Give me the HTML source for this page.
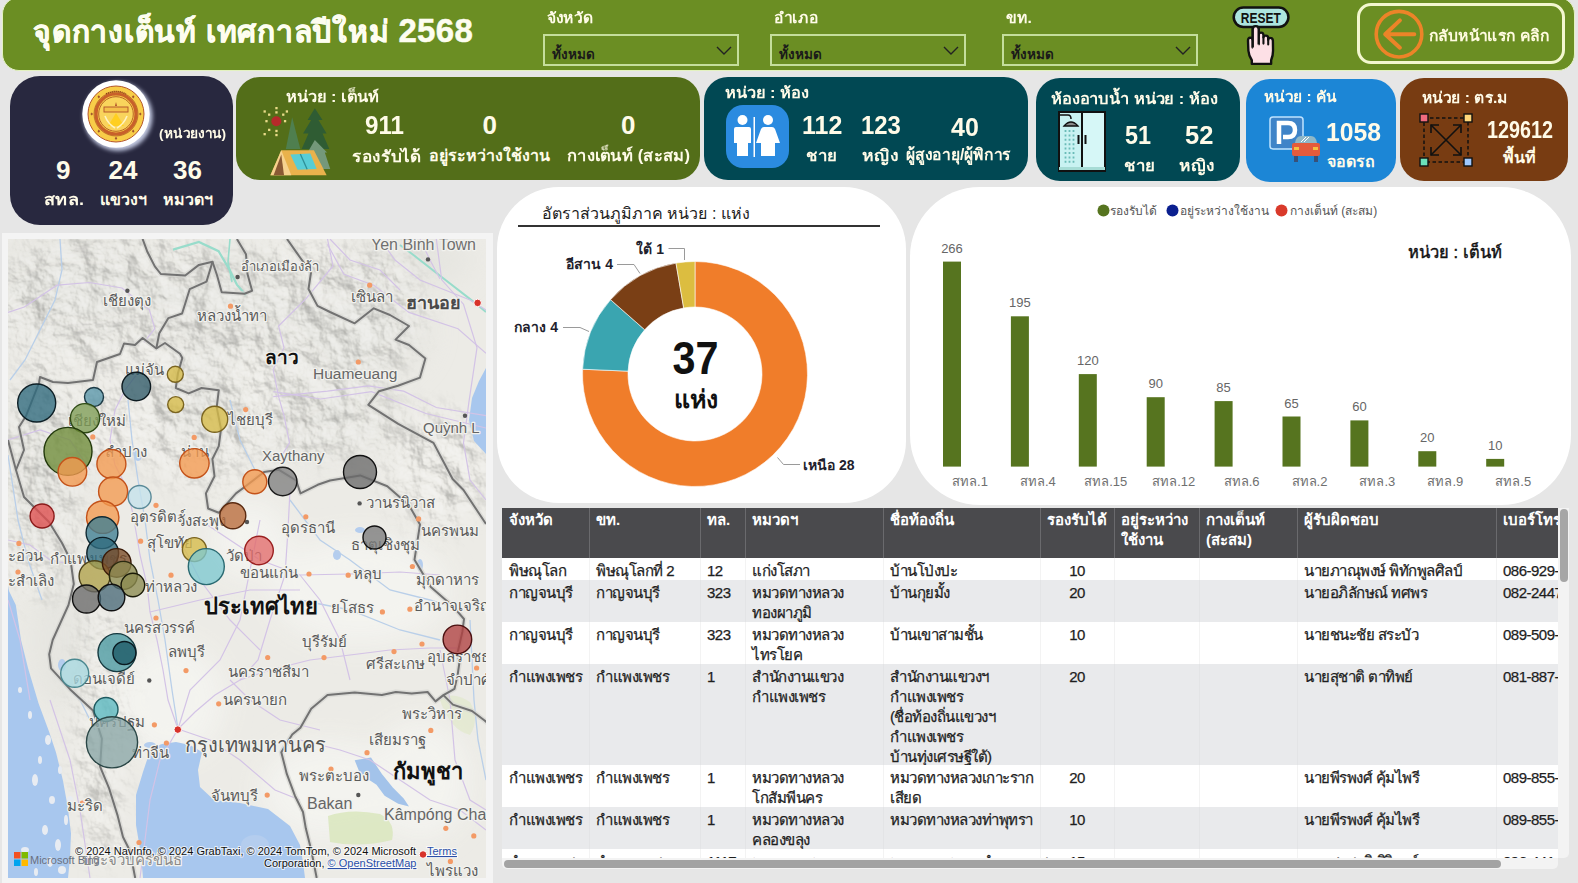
<!DOCTYPE html>
<html><head><meta charset="utf-8">
<style>
*{box-sizing:border-box;margin:0;padding:0}
html,body{width:1578px;height:883px;overflow:hidden;background:#e6e6e6;font-family:"Liberation Sans",sans-serif}
.a{position:absolute}
.c{position:absolute;white-space:nowrap}
.hdr{left:2px;top:-3px;width:1573px;height:74px;background:#6b8e23;border-radius:17px;border:1px solid #e3f2c0}
.ttl{left:33px;top:7.5px;font-size:30px;font-weight:bold;color:#fdfdf0;-webkit-text-stroke:0.5px #fdfdf0;letter-spacing:0.75px}
.flab{font-size:14.5px;font-weight:bold;color:#fffbe8;top:6px;transform-origin:0 0;transform:scaleX(1.08)}
.dd{top:34px;height:32px;border:2px solid #c5de9c;width:196px}
.dd span{position:absolute;left:7px;top:7px;font-size:13.5px;font-weight:bold;color:#1a1a1a}
.dd svg{position:absolute;right:5px;top:10px}
.card{border-radius:24px}
.kpi{color:#fffbe8;font-weight:bold}
.num{font-size:26px;font-weight:bold;color:#fffbe8;transform-origin:0 0}
.lab{font-size:16px;font-weight:bold;color:#fffbe8;transform-origin:0 0}
.unit{font-size:15px;font-weight:bold;color:#fffbe8;transform-origin:0 0}
.th{font-size:15px;font-weight:bold;color:#fff;line-height:20px;white-space:nowrap}
.td{font-size:15px;color:#1e1e1e;line-height:20px;white-space:nowrap;margin-top:1.5px;letter-spacing:-0.5px;-webkit-text-stroke:0.25px #1e1e1e}
</style></head><body>

<!-- HEADER -->
<div class="a hdr"></div>
<div class="c ttl">จุดกางเต็นท์ เทศกาลปีใหม่ <span style="font-size:33px;letter-spacing:0.3px">2568</span></div>

<div class="c flab" style="left:547px">จังหวัด</div>
<div class="a dd" style="left:543px"><span>ทั้งหมด</span><svg width="16" height="10" viewBox="0 0 16 10"><path d="M1 1 L8 8 L15 1" fill="none" stroke="#222" stroke-width="1.4"/></svg></div>
<div class="c flab" style="left:774px">อำเภอ</div>
<div class="a dd" style="left:770px"><span>ทั้งหมด</span><svg width="16" height="10" viewBox="0 0 16 10"><path d="M1 1 L8 8 L15 1" fill="none" stroke="#222" stroke-width="1.4"/></svg></div>
<div class="c flab" style="left:1006px">ขท.</div>
<div class="a dd" style="left:1002px"><span>ทั้งหมด</span><svg width="16" height="10" viewBox="0 0 16 10"><path d="M1 1 L8 8 L15 1" fill="none" stroke="#222" stroke-width="1.4"/></svg></div>

<!-- RESET -->
<svg class="a" style="left:1225px;top:0px" width="75" height="70" viewBox="0 0 946 883">
  <path d="M350 600 L350 370 Q350 330 387 330 Q425 330 425 370 L425 440 Q425 412 455 412 Q485 412 485 445 L485 470 Q490 448 515 450 Q545 452 545 480 L545 500 Q550 476 572 478 Q602 480 604 512 L606 640 Q606 700 582 760 L582 805 L338 805 L338 760 Q300 700 295 640 L290 512 Q290 476 318 474 Q348 474 350 512 Z" fill="#fde0e6" stroke="#111" stroke-width="30" stroke-linejoin="round"/>
  <path d="M425 440 L425 560 M485 470 L485 550 M545 500 L545 560" stroke="#111" stroke-width="26" stroke-linecap="round"/>
  <rect x="110" y="95" width="690" height="245" rx="122" fill="#ade5df" stroke="#111" stroke-width="32"/>
  <path d="M350 620 L350 370 Q350 330 387 330 Q425 330 425 370 L425 620 Z" fill="#fde0e6"/><path d="M350 600 L350 370 Q350 330 387 330 Q425 330 425 370 L425 560" fill="none" stroke="#111" stroke-width="30" stroke-linejoin="round"/>
  <text x="452" y="286" text-anchor="middle" font-family="Liberation Sans" font-weight="bold" font-size="185" fill="#111" transform="translate(452 0) scale(0.82 1) translate(-452 0)">RESET</text>
</svg>
<!-- BACK BUTTON -->
<div class="a" style="left:1357px;top:3px;width:208px;height:61px;border:3px solid #f3f7cf;border-radius:14px"></div>
<svg class="a" style="left:1373px;top:8px" width="52" height="52" viewBox="0 0 52 52">
  <circle cx="26" cy="26.2" r="22.8" fill="none" stroke="#ec8428" stroke-width="3.6"/>
  <path d="M41.3 26.2 H12.2 M26.9 12.4 L12.2 26.2 L26.9 39.7" fill="none" stroke="#ec8428" stroke-width="4" stroke-linecap="round" stroke-linejoin="round"/>
</svg>
<div class="c" style="left:1429px;top:24px;font-size:15px;font-weight:bold;color:#fffbe0;transform-origin:0 0;transform:scaleX(1.044)">กลับหน้าแรก คลิก</div>

<!-- KPI CARDS -->
<div class="a card" style="left:10px;top:76px;width:223px;height:149px;background:#28283f;border-radius:30px"></div>
<div class="a card" style="left:236px;top:77px;width:464px;height:103px;background:#536e19"></div>
<div class="a card" style="left:704px;top:77px;width:324px;height:103px;background:#014853"></div>
<div class="a card" style="left:1036px;top:78px;width:204px;height:103px;background:#014853"></div>
<div class="a card" style="left:1246px;top:79px;width:150px;height:103px;background:#1c86d6"></div>
<div class="a card" style="left:1400px;top:78px;width:168px;height:103px;background:#783c12"></div>


<!-- NAVY CARD CONTENT -->
<svg class="a" style="left:77px;top:75px" width="80" height="80" viewBox="-3 -3 80 80">
  <defs><filter id="glw" x="-30%" y="-30%" width="160%" height="160%"><feGaussianBlur stdDeviation="2.2"/></filter></defs>
  <circle cx="38" cy="38.5" r="34.5" fill="#dfe6ff" opacity="0.85" filter="url(#glw)"/>
  <circle cx="36" cy="36" r="33.7" fill="#ffffff"/>
  <circle cx="36" cy="36" r="28" fill="#f8cd48" stroke="#b5562a" stroke-width="1"/>
  <path d="M53.2 17.2 L54.5 18.8 L53.2 20.4 L51.9 18.8 Z" fill="#a0522d"/><path d="M60.3 34.4 L61.6 36.0 L60.3 37.6 L59.0 36.0 Z" fill="#a0522d"/><path d="M53.2 51.6 L54.5 53.2 L53.2 54.8 L51.9 53.2 Z" fill="#a0522d"/><path d="M36.0 58.7 L37.3 60.3 L36.0 61.9 L34.7 60.3 Z" fill="#a0522d"/><path d="M18.8 51.6 L20.1 53.2 L18.8 54.8 L17.5 53.2 Z" fill="#a0522d"/><path d="M11.7 34.4 L13.0 36.0 L11.7 37.6 L10.4 36.0 Z" fill="#a0522d"/><path d="M18.8 17.2 L20.1 18.8 L18.8 20.4 L17.5 18.8 Z" fill="#a0522d"/>
  <path d="M26 16 Q36 11 46 16" fill="none" stroke="#8a3a1a" stroke-width="1.6" stroke-dasharray="1.2 0.8"/>
  <circle cx="36" cy="36" r="20" fill="none" stroke="#c8602a" stroke-width="3.2"/>
  <circle cx="36" cy="36" r="17.3" fill="#f9d45c" stroke="#a84a1e" stroke-width="0.8"/>
  <circle cx="36" cy="36" r="22" fill="none" stroke="#a84a1e" stroke-width="0.7"/>
  <rect x="24" y="29" width="24" height="5" fill="#f4c04a" stroke="#b0502a" stroke-width="0.9"/>
  <path d="M35 28 L36 24 L37 28 Z" fill="#b0502a"/>
  <path d="M28 48 L36 35 L44 48 Z" fill="#ffcf20"/>
  <path d="M25 38 Q28 46 35 50 M47 38 Q44 46 37 50" fill="none" stroke="#fff3c0" stroke-width="1.6"/>
</svg>
<div class="c" style="left:159px;top:123px;font-size:13px;font-weight:bold;color:#fffbe8;transform-origin:0 0;transform:scaleX(1.053)">(หน่วยงาน)</div>
<div class="c num" style="left:56px;top:155px">9</div>
<div class="c num" style="left:108.5px;top:155px">24</div>
<div class="c num" style="left:173px;top:155px">36</div>
<div class="c lab" style="left:44px;top:187px;transform:scaleX(1.13)">สทล.</div>
<div class="c lab" style="left:100px;top:187px">แขวงฯ</div>
<div class="c lab" style="left:163px;top:187px">หมวดฯ</div>

<!-- GREEN CARD CONTENT -->
<div class="c unit" style="left:286px;top:85px;transform:scaleX(1.094)">หน่วย : เต็นท์</div>
<svg class="a" style="left:255px;top:100px" width="90" height="80" viewBox="0 0 90 80">
<rect x="20.31" y="6.98" width="2.3" height="2.3" fill="#eadc8a"/><rect x="20.31" y="11.24" width="2.3" height="2.3" fill="#eadc8a"/><rect x="8.52" y="10.33" width="2.3" height="2.3" fill="#eadc8a"/><rect x="13.05" y="13.51" width="2.3" height="2.3" fill="#eadc8a"/><rect x="30.73" y="10.33" width="2.3" height="2.3" fill="#eadc8a"/><rect x="27.11" y="13.51" width="2.3" height="2.3" fill="#eadc8a"/><rect x="10.33" y="20.03" width="2.3" height="2.3" fill="#eadc8a"/><rect x="28.92" y="20.03" width="2.3" height="2.3" fill="#eadc8a"/><rect x="13.05" y="28.74" width="2.3" height="2.3" fill="#eadc8a"/><rect x="8.52" y="33.00" width="2.3" height="2.3" fill="#eadc8a"/><rect x="20.31" y="29.83" width="2.3" height="2.3" fill="#eadc8a"/><rect x="20.31" y="33.90" width="2.3" height="2.3" fill="#eadc8a"/>
<circle cx="21.31" cy="21.31" r="5" fill="#b52a2a"/>
<polygon points="37.17,17.23 30.83,48.96 45.33,48.96" fill="#4f7f4f"/>
<polygon points="59.84,8.16 52.58,19.95 56.21,19.95 48.05,33.54 53.49,33.54 46.69,48.96 74.34,48.96 67.54,33.54 71.62,33.54 63.46,19.95 67.54,19.95" fill="#2f5c33"/>
<polygon points="59.84,39.89 52.58,52.58 55.30,52.58 50.77,68.90 75.25,68.90 69.81,52.58 72.08,52.58" fill="#74987a"/>
<polygon points="15.41,75.25 26.29,50.32 58.93,50.32 71.62,75.25" fill="#e9b24c"/>
<polygon points="15.41,75.25 26.29,50.32 36.26,75.25" fill="#f6d28e"/>
<polygon points="18.59,75.25 26.29,54.40 29.01,75.25" fill="#8a5a34"/>
<polygon points="35.36,54.40 55.30,53.49 61.65,68.90 42.61,69.81" fill="#58cdd6"/>
<path d="M45.33 53.94 L52.13 69.36" stroke="#2f8f98" stroke-width="1.3"/>
</svg>
<div class="c num" style="left:365px;top:110px;transform:scaleX(0.93)">911</div>
<div class="c num" style="left:482.5px;top:110px">0</div>
<div class="c num" style="left:621px;top:110px">0</div>
<div class="c lab" style="left:352px;top:144px;transform:scaleX(1.07)">รองรับได้</div>
<div class="c lab" style="left:429px;top:143px">อยู่ระหว่างใช้งาน</div>
<div class="c lab" style="left:567px;top:143px;transform:scaleX(1.033)">กางเต็นท์ (สะสม)</div>

<!-- TEAL CARD CONTENT -->
<div class="c unit" style="left:725px;top:81px;transform:scaleX(1.095)">หน่วย : ห้อง</div>
<svg class="a" style="left:726px;top:105px" width="63" height="63" viewBox="0 0 63 63">
  <rect x="0" y="0" width="63" height="63" rx="17" fill="#2b8be0"/>
  <circle cx="16.5" cy="15" r="5" fill="#fff"/>
  <path d="M10 22 H23 Q25 22 25 24 V38 H22 V51 H11 V38 H8 V24 Q8 22 10 22 Z" fill="#fff"/>
  <rect x="27.5" y="12" width="1.5" height="40" fill="#fff"/>
  <circle cx="42" cy="15" r="5" fill="#fff"/>
  <path d="M38 22 H46 Q48 22 49 24 L54 38 H49 V51 H35 V38 H30 L35 24 Q36 22 38 22 Z" fill="#fff"/>
</svg>
<div class="c num" style="left:802px;top:110px;transform:scaleX(0.96)">112</div>
<div class="c num" style="left:861px;top:110px;transform:scaleX(0.92)">123</div>
<div class="c num" style="left:951px;top:112px;transform:scaleX(0.96)">40</div>
<div class="c lab" style="left:806px;top:143px;transform:scaleX(1.05)">ชาย</div>
<div class="c lab" style="left:862px;top:143px;transform:scaleX(1.1)">หญิง</div>
<div class="c lab" style="left:906px;top:142px;transform:scaleX(0.98)">ผู้สูงอายุ/ผู้พิการ</div>

<!-- TEAL2 CARD -->
<div class="c unit" style="left:1051px;top:87px;transform:scaleX(1.099)">ห้องอาบน้ำ หน่วย : ห้อง</div>
<svg class="a" style="left:1056px;top:110px" width="52" height="64" viewBox="0 0 52 64">
  <rect x="2" y="1" width="48" height="61" fill="#111"/>
  <rect x="4" y="3" width="21" height="54" fill="#c9f2f2"/>
  <rect x="27" y="3" width="21" height="54" fill="#d6f7f7"/>
  <rect x="3" y="57" width="46" height="3" fill="#a7dcd6"/>
  <path d="M4 5 H12 Q15 5 15 9" fill="none" stroke="#111" stroke-width="1.5"/>
  <path d="M8 16 Q15 8 22 16 Z" fill="#8a8a8a" stroke="#111" stroke-width="1.3"/>
  <g stroke="#6bbcb8" stroke-width="1.8" stroke-dasharray="2 2.4"><path d="M9.5 20 V54 M13.5 20 V54 M17.5 20 V54"/></g>
  <rect x="21.5" y="25" width="2" height="9" fill="#111"/><rect x="28.5" y="25" width="2" height="9" fill="#111"/>
</svg>
<div class="c num" style="left:1125px;top:120px;transform:scaleX(0.9)">51</div>
<div class="c num" style="left:1185px;top:120px;transform:scaleX(0.98)">52</div>
<div class="c lab" style="left:1123.5px;top:153px;transform:scaleX(1.05)">ชาย</div>
<div class="c lab" style="left:1178.5px;top:153px;transform:scaleX(1.08)">หญิง</div>

<!-- BLUE CARD -->
<div class="c unit" style="left:1264px;top:85px;transform:scaleX(1.03)">หน่วย : คัน</div>
<svg class="a" style="left:1268px;top:115px" width="62" height="52" viewBox="0 0 62 52">
  <rect x="2" y="2" width="33" height="32" rx="3" fill="#3f84c8" stroke="#bfe3ff" stroke-width="1.5"/>
  <path d="M11 29 V8 H20 Q27 8 27 15 Q27 22 20 22 H15" fill="none" stroke="#fff" stroke-width="4.5"/>
  <path d="M27 28 Q28 21 33 21 H43 Q48 21 49 28 Z" fill="#8fb8c8"/>
  <path d="M33 27 L38 22 M36 27 L41 22" stroke="#fff" stroke-width="1"/>
  <rect x="24" y="28" width="28" height="13" rx="2" fill="#e55b3c"/>
  <rect x="26" y="32" width="5" height="3" fill="#f6c041"/><rect x="45" y="32" width="5" height="3" fill="#f6c041"/>
  <rect x="26" y="41" width="4" height="6" fill="#37517a"/><rect x="46" y="41" width="4" height="6" fill="#37517a"/>
</svg>
<div class="c num" style="left:1326px;top:117px;transform:scaleX(0.95)">1058</div>
<div class="c lab" style="left:1327px;top:149px">จอดรถ</div>

<!-- BROWN CARD -->
<div class="c unit" style="left:1422px;top:86px;transform:scaleX(1.04)">หน่วย : ตร.ม</div>
<svg class="a" style="left:1418px;top:112px" width="56" height="56" viewBox="0 0 56 56">
  <rect x="6" y="6" width="44" height="44" fill="none" stroke="#111" stroke-width="1.5" stroke-dasharray="3.5 2.5"/>
  <path d="M13 13 L43 43 M43 13 L13 43" stroke="#111" stroke-width="1.6"/>
  <path d="M13 21 V13 H21 M35 13 H43 V21 M43 35 V43 H35 M21 43 H13 V35" fill="none" stroke="#111" stroke-width="1.6"/>
  <rect x="2" y="2" width="8" height="8" fill="#f06b7e" stroke="#111" stroke-width="1.4"/>
  <rect x="46" y="2" width="8" height="8" fill="#ffd77a" stroke="#111" stroke-width="1.4"/>
  <rect x="2" y="46" width="8" height="8" fill="#6be0b8" stroke="#111" stroke-width="1.4"/>
  <rect x="46" y="46" width="8" height="8" fill="#9ec8ff" stroke="#111" stroke-width="1.4"/>
</svg>
<div class="c num" style="left:1487px;top:116.5px;font-size:23px;transform:scaleX(0.86)">129612</div>
<div class="c lab" style="left:1503px;top:145px">พื้นที่</div>

<!-- WHITE CHART CARDS -->
<div class="a" style="left:497px;top:187px;width:409px;height:316px;background:#fff;border-radius:62px"></div>
<div class="a" style="left:910px;top:187px;width:661px;height:318px;background:#fff;border-radius:70px"></div>


<!-- DONUT -->
<div class="c" style="left:542px;top:201px;font-size:16px;color:#1d1d1d">อัตราส่วนภูมิภาค หน่วย : แห่ง</div>
<div class="a" style="left:518px;top:224.5px;width:362px;height:2.5px;background:#333"></div>
<svg class="a" style="left:0;top:0" width="910" height="505" viewBox="0 0 910 505">
<path d="M695.00 261.50 A112.5 112.5 0 1 1 582.60 369.23 L628.06 371.16 A67 67 0 1 0 695.00 307.00 Z" fill="#f07d2a" stroke="#fff" stroke-width="0.6"/>
<path d="M582.60 369.23 A112.5 112.5 0 0 1 610.55 299.67 L644.70 329.73 A67 67 0 0 0 628.06 371.16 Z" fill="#3aa5b0" stroke="#fff" stroke-width="0.6"/>
<path d="M610.55 299.67 A112.5 112.5 0 0 1 675.99 263.12 L683.68 307.96 A67 67 0 0 0 644.70 329.73 Z" fill="#7a3f15" stroke="#fff" stroke-width="0.6"/>
<path d="M675.99 263.12 A112.5 112.5 0 0 1 695.00 261.50 L695.00 307.00 A67 67 0 0 0 683.68 307.96 Z" fill="#dcbd40" stroke="#fff" stroke-width="0.6"/>
<g fill="none" stroke="#9a9a9a" stroke-width="1">
<path d="M668.5 248.5 H684.5 V260"/>
<path d="M617 264.5 H634 L640 273.5"/>
<path d="M563 327.5 H580 L589 331.5"/>
<path d="M777.5 457.5 L783.5 464.5 H800"/>
</g>
<g font-family="Liberation Sans" font-weight="bold" font-size="14" fill="#1f1f2e">
<text x="664" y="253.5" text-anchor="end">ใต้ 1</text>
<text x="613" y="269" text-anchor="end">อีสาน 4</text>
<text x="558" y="332" text-anchor="end">กลาง 4</text>
<text x="803" y="469.5">เหนือ 28</text>
</g>
<text x="695.5" y="374.5" text-anchor="middle" font-family="Liberation Sans" font-weight="bold" font-size="47" fill="#111" transform="translate(695.5 0) scale(0.88 1) translate(-695.5 0)">37</text>
<text x="696" y="407.5" text-anchor="middle" font-family="Liberation Sans" font-weight="bold" font-size="25" fill="#111">แห่ง</text>
</svg>

<!-- BAR CHART -->
<svg class="a" style="left:0;top:0" width="1578" height="505" viewBox="0 0 1578 505">
<style>.bv{font-family:"Liberation Sans";font-size:13px;fill:#666} .bc{font-family:"Liberation Sans";font-size:13px;fill:#707070}</style>
<rect x="943.0" y="261.6" width="18" height="205.0" fill="#56741f"/><text x="952.0" y="252.6" text-anchor="middle" class="bv">266</text><text x="970.0" y="486.0" text-anchor="middle" class="bc">สทล.1</text><rect x="1010.9" y="316.3" width="18" height="150.3" fill="#56741f"/><text x="1019.9" y="307.3" text-anchor="middle" class="bv">195</text><text x="1037.9" y="486.0" text-anchor="middle" class="bc">สทล.4</text><rect x="1078.8" y="374.1" width="18" height="92.5" fill="#56741f"/><text x="1087.8" y="365.1" text-anchor="middle" class="bv">120</text><text x="1105.8" y="486.0" text-anchor="middle" class="bc">สทล.15</text><rect x="1146.7" y="397.2" width="18" height="69.4" fill="#56741f"/><text x="1155.7" y="388.2" text-anchor="middle" class="bv">90</text><text x="1173.7" y="486.0" text-anchor="middle" class="bc">สทล.12</text><rect x="1214.6" y="401.1" width="18" height="65.5" fill="#56741f"/><text x="1223.6" y="392.1" text-anchor="middle" class="bv">85</text><text x="1241.6" y="486.0" text-anchor="middle" class="bc">สทล.6</text><rect x="1282.5" y="416.5" width="18" height="50.1" fill="#56741f"/><text x="1291.5" y="407.5" text-anchor="middle" class="bv">65</text><text x="1309.5" y="486.0" text-anchor="middle" class="bc">สทล.2</text><rect x="1350.4" y="420.4" width="18" height="46.2" fill="#56741f"/><text x="1359.4" y="411.4" text-anchor="middle" class="bv">60</text><text x="1377.4" y="486.0" text-anchor="middle" class="bc">สทล.3</text><rect x="1418.3" y="451.2" width="18" height="15.4" fill="#56741f"/><text x="1427.3" y="442.2" text-anchor="middle" class="bv">20</text><text x="1445.3" y="486.0" text-anchor="middle" class="bc">สทล.9</text><rect x="1486.2" y="458.9" width="18" height="7.7" fill="#56741f"/><text x="1495.2" y="449.9" text-anchor="middle" class="bv">10</text><text x="1513.2" y="486.0" text-anchor="middle" class="bc">สทล.5</text>
<circle cx="1103.5" cy="210.5" r="6" fill="#56741f"/>
<circle cx="1172.5" cy="210.5" r="6" fill="#0a1f8f"/>
<circle cx="1281.5" cy="210.5" r="6" fill="#d93a2b"/>
<g font-family="Liberation Sans" font-size="12" fill="#555">
<text x="1110" y="215">รองรับได้</text>
<text x="1180" y="215">อยู่ระหว่างใช้งาน</text>
<text x="1290" y="215">กางเต็นท์ (สะสม)</text>
</g>
<text x="1408" y="258" font-family="Liberation Sans" font-size="16.5" fill="#111" stroke="#111" stroke-width="0.45">หน่วย : เต็นท์</text>
</svg>

<!-- MAP FRAME -->
<div class="a" style="left:2px;top:233px;width:491px;height:650px;background:#f4f4f4"></div>
<!--MAPSTART-->
<svg class="a" style="left:8px;top:239px" width="478" height="639" viewBox="8 239 478 639">
<defs><clipPath id="mc"><rect x="8" y="239" width="478" height="639"/></clipPath><filter id="tex" x="0" y="0" width="100%" height="100%" color-interpolation-filters="sRGB"><feTurbulence type="fractalNoise" baseFrequency="0.03" numOctaves="5" seed="7" result="n"/><feDiffuseLighting in="n" surfaceScale="7" diffuseConstant="1.0" lighting-color="#ffffff" result="l"><feDistantLight azimuth="315" elevation="55"/></feDiffuseLighting><feColorMatrix in="l" type="matrix" values="0 0 0 0 0.3  0 0 0 0 0.3  0 0 0 0 0.29  -2.2 0 0 0 1.8"/></filter><filter id="tex2" x="0" y="0" width="100%" height="100%" color-interpolation-filters="sRGB"><feTurbulence type="fractalNoise" baseFrequency="0.03" numOctaves="5" seed="7" result="n"/><feDiffuseLighting in="n" surfaceScale="7" diffuseConstant="1.0" lighting-color="#ffffff" result="l"><feDistantLight azimuth="315" elevation="55"/></feDiffuseLighting><feColorMatrix in="l" type="matrix" values="0 0 0 0 1  0 0 0 0 1  0 0 0 0 1  2.5 0 0 0 -2.05"/></filter><mask id="mtn"><rect x="8" y="239" width="478" height="639" fill="#000"/><g filter="url(#bl8)" fill="#fff"><ellipse cx="120" cy="300" rx="140" ry="70"/><ellipse cx="300" cy="320" rx="120" ry="80"/><ellipse cx="375" cy="285" rx="45" ry="40"/><ellipse cx="200" cy="420" rx="60" ry="70"/><ellipse cx="320" cy="420" rx="80" ry="40"/><ellipse cx="40" cy="480" rx="40" ry="120"/><ellipse cx="100" cy="730" rx="22" ry="140"/><ellipse cx="440" cy="470" rx="50" ry="60"/><ellipse cx="110" cy="420" rx="50" ry="40"/></g></mask><filter id="bl8"><feGaussianBlur stdDeviation="14"/></filter><filter id="halo"><feMorphology operator="dilate" radius="1.2"/></filter></defs>
<g clip-path="url(#mc)">
<rect x="8" y="239" width="478" height="639" fill="#ecebe6"/>
<g filter="url(#bl8)" fill="#e2e2dd" opacity="0.6">
<ellipse cx="80" cy="290" rx="110" ry="60"/>
<ellipse cx="230" cy="300" rx="90" ry="55"/>
<ellipse cx="350" cy="330" rx="80" ry="60"/>
<ellipse cx="40" cy="470" rx="40" ry="90"/>
<ellipse cx="60" cy="640" rx="30" ry="70"/>
<ellipse cx="330" cy="420" rx="70" ry="40"/>
<ellipse cx="200" cy="400" rx="40" ry="50"/>
<ellipse cx="410" cy="260" rx="60" ry="30"/>
</g>
<g filter="url(#bl8)" fill="#f4f4f1" opacity="0.9">
<ellipse cx="170" cy="700" rx="55" ry="60"/>
<ellipse cx="360" cy="590" rx="90" ry="55"/>
<ellipse cx="330" cy="790" rx="70" ry="50"/>
<ellipse cx="250" cy="540" rx="40" ry="40"/>
<ellipse cx="420" cy="780" rx="50" ry="60"/>
</g>
<g mask="url(#mtn)"><rect x="8" y="239" width="478" height="639" filter="url(#tex)" opacity="0.3"/><rect x="8" y="239" width="478" height="639" filter="url(#tex2)" opacity="0.8"/></g>
<ellipse cx="360" cy="830" rx="34" ry="14" fill="#d5e3b5" filter="url(#bl8)" opacity="0.0"/>
<path d="M328 816 Q350 808 380 814 Q396 822 392 840 Q360 848 330 842 Z" fill="#d9e6bd" opacity="0.85"/>
<path d="M440 700 Q452 690 470 702 Q480 720 470 735 Q450 730 440 700 Z" fill="#dfe8c6" opacity="0.6"/>
<polygon points="8.0,586.0 9.0,591.0 15.8,605.0 21.0,640.0 28.0,668.0 38.6,703.5 49.0,731.6 56.0,752.6 63.0,780.7 68.0,808.8 71.0,833.4 70.0,858.0 68.0,878.0 8.0,878.0" fill="#a8c7ee"/>
<polygon points="151.0,748.0 162.0,744.0 176.0,742.0 190.0,745.0 202.0,752.0 198.0,770.0 200.0,787.0 214.0,800.0 240.0,803.0 268.0,809.0 290.0,826.0 300.0,845.0 303.0,862.0 305.0,878.0 143.0,878.0 141.0,855.0 136.0,825.0 136.0,795.0 143.0,772.0" fill="#a8c7ee"/>
<polygon points="486.0,368.0 479.0,381.0 472.0,398.0 469.0,420.0 474.0,441.0 486.0,454.0" fill="#a8c7ee"/>
<polygon points="354.7,760.3 371.0,757.6 381.9,773.9 392.8,787.5 403.7,798.4 409.0,806.5 398.2,803.8 384.6,795.7 376.5,784.8 360.2,773.9" fill="#a3c3ea"/>
<ellipse cx="138" cy="455" rx="4" ry="6" fill="#b4cdee"/>
<ellipse cx="360" cy="530" rx="5" ry="3" fill="#b4cdee"/>
<ellipse cx="337" cy="555" rx="4" ry="5" fill="#b4cdee"/>
<ellipse cx="62" cy="665" rx="4" ry="6" fill="#b4cdee"/>
<ellipse cx="420" cy="565" rx="3" ry="6" fill="#b4cdee"/>
<ellipse cx="150" cy="745" rx="6" ry="3" fill="#b4cdee"/>
<ellipse cx="255" cy="845" rx="14" ry="10" fill="#b4cdee"/>
<ellipse cx="35" cy="780" rx="3" ry="6" fill="#e8ecf2"/>
<ellipse cx="45" cy="830" rx="3" ry="5" fill="#e8ecf2"/>
<ellipse cx="25" cy="850" rx="4" ry="3" fill="#e8ecf2"/>
<ellipse cx="52" cy="800" rx="3" ry="4" fill="#e8ecf2"/>
<ellipse cx="40" cy="760" rx="2" ry="4" fill="#e8ecf2"/>
<ellipse cx="48" cy="740" rx="3" ry="5" fill="#e8ecf2"/>
<ellipse cx="30" cy="715" rx="2" ry="4" fill="#e8ecf2"/>
<ellipse cx="58" cy="845" rx="3" ry="6" fill="#e8ecf2"/>
<ellipse cx="62" cy="870" rx="4" ry="4" fill="#e8ecf2"/>
<ellipse cx="20" cy="690" rx="2" ry="3" fill="#e8ecf2"/>
<ellipse cx="66" cy="820" rx="2" ry="5" fill="#e8ecf2"/>
<ellipse cx="50" cy="862" rx="3" ry="5" fill="#e8ecf2"/>
<ellipse cx="36" cy="872" rx="2" ry="4" fill="#e8ecf2"/>
<ellipse cx="70" cy="800" rx="3" ry="4" fill="#e8ecf2"/>
<ellipse cx="60" cy="770" rx="2" ry="4" fill="#e8ecf2"/>
<g fill="none" stroke="#b9cfe9" stroke-width="1.3">
<polyline points="60.0,239.0 62.0,270.0 55.0,300.0 40.0,330.0 25.0,360.0 10.0,380.0"/>
<polyline points="8.0,455.0 18.0,520.0 28.0,560.0 42.0,600.0"/>
<polyline points="128.0,400.0 132.0,440.0 138.0,480.0 145.0,520.0 150.0,560.0 158.0,600.0 165.0,640.0 172.0,690.0 178.0,729.0"/>
<polyline points="230.0,400.0 240.0,440.0 255.0,470.0"/>
<polyline points="290.0,500.0 320.0,540.0 350.0,560.0 390.0,590.0 430.0,600.0 463.0,610.0"/>
<polyline points="300.0,600.0 350.0,610.0 400.0,630.0 440.0,640.0"/>
<polyline points="470.0,620.0 472.0,660.0 474.0,700.0 478.0,740.0 486.0,780.0"/>
<polyline points="60.0,680.0 80.0,700.0 95.0,730.0"/>
</g>
<polyline points="173,249.6 198.9,242 218.6,251.2 229.3,269.4 236.9,284.6 246,295.3" fill="none" stroke="#98dccb" stroke-width="2.2"/>
<polyline points="230,239 228,262 232,282" fill="none" stroke="#98dccb" stroke-width="1.6"/>
<polyline points="400,245 411.5,253.5 444.2,279 476.9,304.4 486,312" fill="none" stroke="#98dccb" stroke-width="2"/>
<g fill="none" stroke="#d3c3e6" stroke-width="1.2">
<polyline points="8.0,312.4 24.3,307.0 57.0,285.2 89.5,282.5 122.0,288.0 149.3,309.7 154.8,328.7 143.9,342.3"/>
<polyline points="327.5,239.0 333.0,266.0 305.8,298.8 278.6,326.0 284.0,347.7 273.2,369.5 278.6,396.6 284.0,415.7 289.5,442.9 281.3,456.5"/>
<polyline points="273.2,396.6 327.5,391.2 368.3,385.8 403.7,391.2 436.3,407.5 486.0,415.7"/>
<polyline points="327.5,244.4 343.9,274.3 373.8,285.2 409.0,312.4 458.0,328.7 486.0,353.2"/>
<polyline points="436.3,239.0 441.7,279.8 463.5,304.2 477.0,347.7 468.9,402.1 463.5,442.9 470.0,480.0 486.0,500.0"/>
<polyline points="178.0,729.0 168.0,700.0 163.0,670.0 157.0,640.0 150.0,612.0 147.0,585.0 140.0,555.0 134.0,520.0 128.0,490.0 115.0,465.0 110.0,440.0 115.0,410.0 125.0,390.0 140.0,370.0"/>
<polyline points="178.0,729.0 195.0,712.0 215.0,695.0 240.0,680.0 270.0,670.0 310.0,660.0 350.0,655.0 390.0,650.0 430.0,648.0 460.0,648.0"/>
<polyline points="290.0,490.0 288.0,530.0 285.0,575.0 270.0,620.0 258.0,660.0 240.0,680.0"/>
<polyline points="178.0,729.0 210.0,740.0 240.0,760.0 275.0,790.0 300.0,800.0"/>
<polyline points="300.0,740.0 340.0,750.0 370.0,760.0 400.0,780.0 430.0,800.0 460.0,810.0 486.0,830.0"/>
<polyline points="200.0,520.0 230.0,540.0 260.0,560.0 300.0,575.0 350.0,574.0 400.0,572.0 440.0,575.0"/>
<polyline points="178.0,729.0 160.0,760.0 150.0,800.0 145.0,840.0 140.0,878.0"/>
<polyline points="50.0,700.0 70.0,760.0 80.0,810.0 90.0,878.0"/>
<polyline points="8.0,540.0 30.0,545.0 50.0,560.0 75.0,565.0"/>
<polyline points="8.0,600.0 20.0,640.0 30.0,700.0"/>
<polyline points="180.0,540.0 200.0,580.0 230.0,620.0 260.0,650.0"/>
<polyline points="440.0,650.0 450.0,700.0 455.0,760.0 470.0,800.0 486.0,810.0"/>
<polyline points="380.0,239.0 395.0,260.0 420.0,280.0 470.0,300.0 486.0,310.0"/>
<polyline points="273.4,391.7 320.6,399.0 371.5,391.7 426.0,413.5 486.0,428.0"/>
<polyline points="8.0,440.0 40.0,430.0 70.0,440.0 90.0,470.0"/>
<polyline points="178.0,729.0 190.0,690.0 220.0,660.0 240.0,620.0 250.0,570.0 260.0,520.0"/>
<polyline points="230.0,680.0 250.0,700.0 280.0,720.0 320.0,730.0"/>
<polyline points="300.0,575.0 320.0,600.0 340.0,640.0 350.0,680.0"/>
<polyline points="150.0,612.0 200.0,600.0 250.0,590.0 300.0,590.0"/>
<polyline points="330.0,239.0 350.0,260.0 380.0,270.0 400.0,290.0"/>
<polyline points="420.0,239.0 430.0,260.0 440.0,279.0"/>
</g>
<g fill="none" stroke-linejoin="round">
<polyline points="135.2,878.0 130.0,851.0 123.0,837.0 117.7,815.9 108.9,787.8 100.1,766.7 101.9,738.6 93.0,710.5 70.2,689.4 51.0,668.4 49.2,654.3 52.7,640.0 68.5,605.0 73.8,584.0 70.5,560.0 62.0,543.0 49.0,522.0 24.0,497.0 16.0,470.0 24.0,450.0 19.0,427.0 26.0,416.0 39.0,383.0 40.0,377.0 53.0,382.0 68.0,383.0 93.0,380.0 97.0,362.0 120.0,354.0 124.0,343.5 135.0,345.0 142.6,338.0 156.3,348.5 165.0,343.0 180.0,353.7 182.3,358.0 178.0,373.0 175.8,388.0 188.7,393.4 201.6,388.0 218.8,390.2 216.7,407.4 221.0,429.0 218.8,446.1 212.4,459.0 214.5,476.2 205.9,493.4 208.1,508.5 218.8,512.8 236.0,493.4 244.6,487.0 264.0,472.0 279.0,469.8 296.2,480.5 300.5,493.4 317.7,484.8 330.0,480.5 360.2,475.4 387.3,486.3 409.0,505.3 420.0,524.4 414.5,559.7 430.8,586.9 452.6,605.9 464.0,619.0 462.4,631.7 457.7,652.3 459.3,663.4 457.7,674.5 454.5,688.8 443.4,695.1 435.5,701.4 427.6,692.0 411.7,693.5 395.9,692.0 381.9,695.0 354.7,692.4 327.5,695.0 311.2,708.7 300.4,727.7 292.2,734.5 281.3,752.2 286.8,773.9 294.9,795.7 303.0,812.0 305.8,828.3 311.2,850.0 316.7,878.0" stroke="#d6d6d2" stroke-width="5" opacity="0.7"/>
<polyline points="443.4,695.1 452.9,704.6 472.0,711.0 484.6,720.5 490.0,725.0" stroke="#d6d6d2" stroke-width="5" opacity="0.7"/>
<polyline points="156.3,348.5 159.3,333.3 168.4,318.1 182.1,313.5 189.7,289.2 206.5,281.6 212.5,261.8 198.9,264.9 185.2,275.5 160.8,274.0 154.8,266.4 147.1,251.2 142.6,239.0" stroke="#d6d6d2" stroke-width="5" opacity="0.7"/>
<polyline points="212.5,261.8 217.1,275.5 221.7,292.2 244.5,293.8 252.1,290.7 247.5,274.0 246.0,254.2 236.9,239.0" stroke="#d6d6d2" stroke-width="5" opacity="0.7"/>
<polyline points="287.0,239.0 297.7,254.2 311.0,272.5 308.5,289.0 317.5,305.9 330.0,312.0 354.7,323.3 373.8,308.3 390.0,315.0 409.0,326.0 395.5,339.6 409.0,345.0 425.4,358.6 420.0,377.6 398.0,385.8 379.0,391.2 368.3,404.8 398.2,423.8 433.5,442.9 452.6,479.0 463.5,490.0 486.0,524.0" stroke="#d6d6d2" stroke-width="5" opacity="0.7"/>
<polyline points="8.0,440.0 16.0,470.0" stroke="#d6d6d2" stroke-width="5" opacity="0.7"/>
<polyline points="135.2,878.0 130.0,851.0 123.0,837.0 117.7,815.9 108.9,787.8 100.1,766.7 101.9,738.6 93.0,710.5 70.2,689.4 51.0,668.4 49.2,654.3 52.7,640.0 68.5,605.0 73.8,584.0 70.5,560.0 62.0,543.0 49.0,522.0 24.0,497.0 16.0,470.0 24.0,450.0 19.0,427.0 26.0,416.0 39.0,383.0 40.0,377.0 53.0,382.0 68.0,383.0 93.0,380.0 97.0,362.0 120.0,354.0 124.0,343.5 135.0,345.0 142.6,338.0 156.3,348.5 165.0,343.0 180.0,353.7 182.3,358.0 178.0,373.0 175.8,388.0 188.7,393.4 201.6,388.0 218.8,390.2 216.7,407.4 221.0,429.0 218.8,446.1 212.4,459.0 214.5,476.2 205.9,493.4 208.1,508.5 218.8,512.8 236.0,493.4 244.6,487.0 264.0,472.0 279.0,469.8 296.2,480.5 300.5,493.4 317.7,484.8 330.0,480.5 360.2,475.4 387.3,486.3 409.0,505.3 420.0,524.4 414.5,559.7 430.8,586.9 452.6,605.9 464.0,619.0 462.4,631.7 457.7,652.3 459.3,663.4 457.7,674.5 454.5,688.8 443.4,695.1 435.5,701.4 427.6,692.0 411.7,693.5 395.9,692.0 381.9,695.0 354.7,692.4 327.5,695.0 311.2,708.7 300.4,727.7 292.2,734.5 281.3,752.2 286.8,773.9 294.9,795.7 303.0,812.0 305.8,828.3 311.2,850.0 316.7,878.0" stroke="#727272" stroke-width="2"/>
<polyline points="443.4,695.1 452.9,704.6 472.0,711.0 484.6,720.5 490.0,725.0" stroke="#727272" stroke-width="2"/>
<polyline points="156.3,348.5 159.3,333.3 168.4,318.1 182.1,313.5 189.7,289.2 206.5,281.6 212.5,261.8 198.9,264.9 185.2,275.5 160.8,274.0 154.8,266.4 147.1,251.2 142.6,239.0" stroke="#727272" stroke-width="2"/>
<polyline points="212.5,261.8 217.1,275.5 221.7,292.2 244.5,293.8 252.1,290.7 247.5,274.0 246.0,254.2 236.9,239.0" stroke="#727272" stroke-width="2"/>
<polyline points="287.0,239.0 297.7,254.2 311.0,272.5 308.5,289.0 317.5,305.9 330.0,312.0 354.7,323.3 373.8,308.3 390.0,315.0 409.0,326.0 395.5,339.6 409.0,345.0 425.4,358.6 420.0,377.6 398.0,385.8 379.0,391.2 368.3,404.8 398.2,423.8 433.5,442.9 452.6,479.0 463.5,490.0 486.0,524.0" stroke="#727272" stroke-width="2"/>
<polyline points="8.0,440.0 16.0,470.0" stroke="#727272" stroke-width="2"/>
</g>
<g fill="#f39a66">
<circle cx="230.5" cy="306.2" r="2.6"/>
<circle cx="358.3" cy="362" r="2.6"/>
<circle cx="369.7" cy="285.2" r="2.6"/>
<circle cx="18.9" cy="543.4" r="2.6"/>
<circle cx="18" cy="572" r="2.6"/>
<circle cx="156" cy="505.3" r="2.6"/>
<circle cx="140.6" cy="541.2" r="2.6"/>
<circle cx="171" cy="575.2" r="2.6"/>
<circle cx="156" cy="618" r="2.6"/>
<circle cx="186" cy="670.6" r="2.6"/>
<circle cx="218.7" cy="703.8" r="2.6"/>
<circle cx="92.8" cy="436.9" r="2.6"/>
<circle cx="194.2" cy="437.4" r="2.6"/>
<circle cx="245.7" cy="409.6" r="2.6"/>
<circle cx="305.8" cy="516.8" r="2.6"/>
<circle cx="309" cy="574" r="2.6"/>
<circle cx="348.2" cy="575.2" r="2.6"/>
<circle cx="418.6" cy="518.9" r="2.6"/>
<circle cx="412.4" cy="566.5" r="2.6"/>
<circle cx="382.4" cy="611.9" r="2.6"/>
<circle cx="409.9" cy="609.2" r="2.6"/>
<circle cx="324" cy="657.6" r="2.6"/>
<circle cx="394" cy="651.6" r="2.6"/>
<circle cx="422" cy="644" r="2.6"/>
<circle cx="267.7" cy="657.5" r="2.6"/>
<circle cx="476.6" cy="668" r="2.6"/>
<circle cx="367" cy="752.7" r="2.6"/>
<circle cx="331" cy="769" r="2.6"/>
<circle cx="267.2" cy="795.1" r="2.6"/>
<circle cx="430.8" cy="730.4" r="2.6"/>
<circle cx="445.8" cy="828.3" r="2.6"/>
<circle cx="473.8" cy="835.9" r="2.6"/>
<circle cx="450.4" cy="861.4" r="2.6"/>
<circle cx="154.4" cy="724.8" r="2.6"/>
<circle cx="166.4" cy="743" r="2.6"/>
<circle cx="82.4" cy="803" r="2.6"/>
<circle cx="139" cy="842.5" r="2.6"/>
</g>
<g fill="#555">
<circle cx="127.4" cy="290.7" r="2.2"/>
<circle cx="237.6" cy="277" r="2.2"/>
<circle cx="359.6" cy="503.4" r="2.2"/>
<circle cx="149.3" cy="680.5" r="2.2"/>
<circle cx="358.3" cy="795" r="2.2"/>
<circle cx="465" cy="415.7" r="2.2"/>
<circle cx="428" cy="259.4" r="2.2"/>
<circle cx="247" cy="522" r="2.2"/>
</g>
<circle cx="477.6" cy="302.9" r="3.8" fill="#d8322a" stroke="#fff" stroke-width="1"/>
<circle cx="177.8" cy="729.6" r="3.8" fill="#d8322a" stroke="#fff" stroke-width="1"/>
<circle cx="423" cy="854.5" r="3.8" fill="#d8322a" stroke="#fff" stroke-width="1"/>
<g font-family="Liberation Sans" paint-order="stroke" stroke="#f2f2ee" stroke-width="2.5" stroke-linejoin="round">
<text x="371" y="249.8" font-size="16" fill="#707070" font-weight="normal">Yen Binh Town</text>
<text x="241" y="270.7" font-size="13" fill="#5a5a5a" font-weight="normal">อำเภอเมืองล้า</text>
<text x="351" y="302.4" font-size="15" fill="#5a5a5a" font-weight="normal">เซินลา</text>
<text x="406" y="308.5" font-size="18" fill="#4a4a4a" font-weight="bold">ฮานอย</text>
<text x="103" y="306.4" font-size="15" fill="#5a5a5a" font-weight="normal">เชียงตุง</text>
<text x="197" y="321.4" font-size="15" fill="#5a5a5a" font-weight="normal">หลวงน้ำทา</text>
<text x="265" y="363.8" font-size="19" fill="#111" font-weight="bold">ลาว</text>
<text x="313" y="379.1" font-size="15.5" fill="#666" font-weight="normal">Huameuang</text>
<text x="125" y="374.9" font-size="15" fill="#5a5a5a" font-weight="normal">แม่จัน</text>
<text x="68" y="426.0" font-size="15" fill="#5a5a5a" font-weight="normal">เชียงใหม่</text>
<text x="228" y="425.4" font-size="15" fill="#5a5a5a" font-weight="normal">ไชยบุรี</text>
<text x="423" y="433.4" font-size="15" fill="#666" font-weight="normal">Quỳnh L</text>
<text x="104.5" y="457.4" font-size="15" fill="#5a5a5a" font-weight="normal">ลำปาง</text>
<text x="180.6" y="457.4" font-size="15" fill="#5a5a5a" font-weight="normal">น่าน</text>
<text x="262" y="461.4" font-size="15" fill="#666" font-weight="normal">Xaythany</text>
<text x="366" y="508.0" font-size="15" fill="#5a5a5a" font-weight="normal">วานรนิวาส</text>
<text x="130" y="522.4" font-size="15" fill="#5a5a5a" font-weight="normal">อุตรดิตถ์</text>
<text x="176.5" y="526.4" font-size="15" fill="#5a5a5a" font-weight="normal">วังสะพุง</text>
<text x="281" y="533.4" font-size="15" fill="#5a5a5a" font-weight="normal">อุดรธานี</text>
<text x="421" y="536.4" font-size="15" fill="#5a5a5a" font-weight="normal">นครพนม</text>
<text x="146.6" y="548.4" font-size="15" fill="#5a5a5a" font-weight="normal">สุโขทัย</text>
<text x="350.6" y="550.4" font-size="15" fill="#5a5a5a" font-weight="normal">ธาตุเชิงชุม</text>
<text x="225.5" y="561.0" font-size="15" fill="#5a5a5a" font-weight="normal">วัดป่า</text>
<text x="8" y="561.0" font-size="15" fill="#5a5a5a" font-weight="normal">ะอ่วน</text>
<text x="50" y="564.4" font-size="15" fill="#5a5a5a" font-weight="normal">กำแพงเพชร</text>
<text x="240" y="578.4" font-size="15" fill="#5a5a5a" font-weight="normal">ขอนแก่น</text>
<text x="353" y="579.4" font-size="15" fill="#5a5a5a" font-weight="normal">หลุบ</text>
<text x="416" y="585.4" font-size="15" fill="#5a5a5a" font-weight="normal">มุกดาหาร</text>
<text x="8" y="586.4" font-size="15" fill="#5a5a5a" font-weight="normal">ะสำเลิง</text>
<text x="145" y="592.4" font-size="15" fill="#5a5a5a" font-weight="normal">ท่าหลวง</text>
<text x="204" y="613.9" font-size="22" fill="#111" font-weight="bold">ประเทศไทย</text>
<text x="331" y="613.4" font-size="15" fill="#5a5a5a" font-weight="normal">ยโสธร</text>
<text x="414" y="611.4" font-size="15" fill="#5a5a5a" font-weight="normal">อำนาจเจริญ</text>
<text x="123.5" y="632.9" font-size="15" fill="#5a5a5a" font-weight="normal">นครสวรรค์</text>
<text x="302" y="647.4" font-size="15" fill="#5a5a5a" font-weight="normal">บุรีรัมย์</text>
<text x="168" y="657.4" font-size="15" fill="#5a5a5a" font-weight="normal">ลพบุรี</text>
<text x="427" y="662.4" font-size="15" fill="#5a5a5a" font-weight="normal">อุบลราชธานี</text>
<text x="365.5" y="669.4" font-size="15" fill="#5a5a5a" font-weight="normal">ศรีสะเกษ</text>
<text x="228" y="677.4" font-size="15" fill="#5a5a5a" font-weight="normal">นครราชสีมา</text>
<text x="73" y="684.4" font-size="15" fill="#5a5a5a" font-weight="normal">ดอนเจดีย์</text>
<text x="446" y="685.4" font-size="15" fill="#5a5a5a" font-weight="normal">จำปาศักดิ์</text>
<text x="223" y="705.4" font-size="15" fill="#5a5a5a" font-weight="normal">นครนายก</text>
<text x="402" y="719.4" font-size="15" fill="#5a5a5a" font-weight="normal">พระวิหาร</text>
<text x="89" y="727.4" font-size="15" fill="#5a5a5a" font-weight="normal">นครปฐม</text>
<text x="369" y="745.4" font-size="15" fill="#5a5a5a" font-weight="normal">เสียมราฐ</text>
<text x="185" y="752.2" font-size="20" fill="#555" font-weight="normal">กรุงเทพมหานคร</text>
<text x="132" y="758.4" font-size="15" fill="#5a5a5a" font-weight="normal">ท่าจีน</text>
<text x="393" y="778.9" font-size="22" fill="#111" font-weight="bold">กัมพูชา</text>
<text x="299" y="781.4" font-size="15" fill="#5a5a5a" font-weight="normal">พระตะบอง</text>
<text x="211" y="801.4" font-size="15" fill="#5a5a5a" font-weight="normal">จันทบุรี</text>
<text x="307" y="808.8" font-size="16" fill="#666" font-weight="normal">Bakan</text>
<text x="67" y="811.4" font-size="15" fill="#5a5a5a" font-weight="normal">มะริด</text>
<text x="384" y="819.8" font-size="16" fill="#666" font-weight="normal">Kâmpóng Cha</text>
<text x="427" y="876.4" font-size="15" fill="#5a5a5a" font-weight="normal">ไพรแวง</text>
<text x="82" y="865.4" font-size="15" fill="#8a8a8a" font-weight="normal">ประจวบคีรีขันธ์</text>
</g>
<circle cx="36.7" cy="403" r="19" fill="#2f6a7e" fill-opacity="0.78" stroke="#0d1f26" stroke-width="1.4"/>
<circle cx="94" cy="397" r="9.5" fill="#5a97aa" fill-opacity="0.78" stroke="#1c3a46" stroke-width="1.4"/>
<circle cx="136.3" cy="386.5" r="14.3" fill="#2f5a68" fill-opacity="0.78" stroke="#0d1a20" stroke-width="1.4"/>
<circle cx="175.3" cy="374.3" r="8" fill="#d6bb48" fill-opacity="0.78" stroke="#7a6420" stroke-width="1.4"/>
<circle cx="175.7" cy="404.6" r="8" fill="#d6bb48" fill-opacity="0.78" stroke="#7a6420" stroke-width="1.4"/>
<circle cx="214.7" cy="419.2" r="13" fill="#d6bb48" fill-opacity="0.78" stroke="#7a6420" stroke-width="1.4"/>
<circle cx="85" cy="418.2" r="14.6" fill="#7e9c54" fill-opacity="0.78" stroke="#2e4a14" stroke-width="1.4"/>
<circle cx="68" cy="451.4" r="24" fill="#6e8c38" fill-opacity="0.78" stroke="#233a0c" stroke-width="1.4"/>
<circle cx="72.4" cy="471.8" r="14.3" fill="#f39a50" fill-opacity="0.78" stroke="#c4531a" stroke-width="1.4"/>
<circle cx="111.4" cy="464" r="14.5" fill="#f39a50" fill-opacity="0.78" stroke="#c4531a" stroke-width="1.4"/>
<circle cx="113.1" cy="491.5" r="14.5" fill="#f39a50" fill-opacity="0.78" stroke="#c4531a" stroke-width="1.4"/>
<circle cx="139.6" cy="497" r="11.5" fill="#c4e2ea" fill-opacity="0.78" stroke="#5a8a98" stroke-width="1.4"/>
<circle cx="194.4" cy="463.3" r="14.7" fill="#f39a50" fill-opacity="0.78" stroke="#c4531a" stroke-width="1.4"/>
<circle cx="254.8" cy="481.7" r="12" fill="#f39a50" fill-opacity="0.78" stroke="#c4531a" stroke-width="1.4"/>
<circle cx="282.7" cy="481.5" r="14.2" fill="#808080" fill-opacity="0.78" stroke="#1a1a1a" stroke-width="1.4"/>
<circle cx="42.1" cy="516" r="12" fill="#e05050" fill-opacity="0.78" stroke="#8a1a1a" stroke-width="1.4"/>
<circle cx="102.7" cy="517.2" r="16.2" fill="#f39a50" fill-opacity="0.78" stroke="#c4531a" stroke-width="1.4"/>
<circle cx="102" cy="532.7" r="15.9" fill="#3d7d92" fill-opacity="0.78" stroke="#0f2a34" stroke-width="1.4"/>
<circle cx="232.8" cy="515.7" r="13" fill="#b86a3a" fill-opacity="0.78" stroke="#5a2a10" stroke-width="1.4"/>
<circle cx="194.4" cy="549.6" r="12" fill="#d6bb48" fill-opacity="0.78" stroke="#7a6420" stroke-width="1.4"/>
<circle cx="206.3" cy="566.6" r="18" fill="#7ec8d0" fill-opacity="0.78" stroke="#2a6a72" stroke-width="1.4"/>
<circle cx="259" cy="550.5" r="14.3" fill="#e26a6a" fill-opacity="0.78" stroke="#9a2020" stroke-width="1.4"/>
<circle cx="102.7" cy="553.3" r="15.9" fill="#2f6a7e" fill-opacity="0.78" stroke="#0d1f26" stroke-width="1.4"/>
<circle cx="94.6" cy="576.2" r="15.5" fill="#b0a24a" fill-opacity="0.78" stroke="#4a4018" stroke-width="1.4"/>
<circle cx="116.7" cy="562.9" r="14.3" fill="#7a4a26" fill-opacity="0.78" stroke="#3a1a08" stroke-width="1.4"/>
<circle cx="123.3" cy="575.4" r="14" fill="#8c8a50" fill-opacity="0.78" stroke="#2a2a10" stroke-width="1.4"/>
<circle cx="132.9" cy="585" r="11.8" fill="#8c8a50" fill-opacity="0.78" stroke="#1a1a08" stroke-width="1.4"/>
<circle cx="86.5" cy="599" r="14" fill="#6a6a6a" fill-opacity="0.78" stroke="#111" stroke-width="1.4"/>
<circle cx="111.5" cy="597.5" r="13.3" fill="#4a6a78" fill-opacity="0.78" stroke="#111" stroke-width="1.4"/>
<circle cx="360" cy="472" r="16.5" fill="#6a6a6a" fill-opacity="0.78" stroke="#111" stroke-width="1.4"/>
<circle cx="374.5" cy="537.5" r="11.5" fill="#7a7a7a" fill-opacity="0.78" stroke="#111" stroke-width="1.4"/>
<circle cx="117" cy="652.6" r="19" fill="#4a9aa2" fill-opacity="0.78" stroke="#163a40" stroke-width="1.4"/>
<circle cx="124.4" cy="653" r="11.5" fill="#1e5a66" fill-opacity="0.78" stroke="#0a1a20" stroke-width="1.4"/>
<circle cx="74.7" cy="673.3" r="14" fill="#a8d8e0" fill-opacity="0.78" stroke="#4a8890" stroke-width="1.4"/>
<circle cx="106" cy="709.5" r="12" fill="#5ab8c0" fill-opacity="0.78" stroke="#1e5a60" stroke-width="1.4"/>
<circle cx="112" cy="742.3" r="25.6" fill="#8aa6a6" fill-opacity="0.78" stroke="#2a4646" stroke-width="1.4"/>
<circle cx="457.4" cy="639.4" r="14.3" fill="#b04040" fill-opacity="0.78" stroke="#4a1010" stroke-width="1.4"/>
<g font-family="Liberation Sans" font-size="11" fill="#111" paint-order="stroke" stroke="#ffffff" stroke-width="2" stroke-opacity="0.7">
<text x="75" y="855">© 2024 NavInfo, © 2024 GrabTaxi, © 2024 TomTom, © 2024 Microsoft</text>
<text x="427" y="855" fill="#2a4fa8" text-decoration="underline">Terms</text>
<text x="264" y="867">Corporation, <tspan fill="#2a4fa8" text-decoration="underline">© OpenStreetMap</tspan></text>
</g>
<rect x="14" y="852" width="6.5" height="6.5" fill="#f25022"/><rect x="21.5" y="852" width="6.5" height="6.5" fill="#7fba00"/><rect x="14" y="859.5" width="6.5" height="6.5" fill="#00a4ef"/><rect x="21.5" y="859.5" width="6.5" height="6.5" fill="#ffb900"/>
<text x="30" y="864" font-family="Liberation Sans" font-size="11" fill="#6a7080">Microsoft Bing</text>
</g></svg>

<!--MAPEND-->

<!-- TABLE -->
<div class="a" style="left:502px;top:508px;width:1056px;height:350px;overflow:hidden;background:#fff">
<div class="a" style="left:0;top:0;width:1056px;height:50px;background:#4a4a4d"></div>
<div class="a th" style="left:7px;top:2px">จังหวัด</div>
<div class="a" style="left:87px;top:0;width:1px;height:50px;background:#6a6a6d"></div>
<div class="a th" style="left:94px;top:2px">ขท.</div>
<div class="a" style="left:198px;top:0;width:1px;height:50px;background:#6a6a6d"></div>
<div class="a th" style="left:205px;top:2px">ทล.</div>
<div class="a" style="left:243px;top:0;width:1px;height:50px;background:#6a6a6d"></div>
<div class="a th" style="left:250px;top:2px">หมวดฯ</div>
<div class="a" style="left:381px;top:0;width:1px;height:50px;background:#6a6a6d"></div>
<div class="a th" style="left:388px;top:2px">ชื่อท้องถิ่น</div>
<div class="a" style="left:538px;top:0;width:1px;height:50px;background:#6a6a6d"></div>
<div class="a th" style="left:545px;top:2px">รองรับได้</div>
<div class="a" style="left:612px;top:0;width:1px;height:50px;background:#6a6a6d"></div>
<div class="a th" style="left:619px;top:2px">อยู่ระหว่าง<br>ใช้งาน</div>
<div class="a" style="left:697px;top:0;width:1px;height:50px;background:#6a6a6d"></div>
<div class="a th" style="left:704px;top:2px">กางเต็นท์<br>(สะสม)</div>
<div class="a" style="left:795px;top:0;width:1px;height:50px;background:#6a6a6d"></div>
<div class="a th" style="left:802px;top:2px">ผู้รับผิดชอบ</div>
<div class="a" style="left:994px;top:0;width:1px;height:50px;background:#6a6a6d"></div>
<div class="a th" style="left:1001px;top:2px">เบอร์โทร</div>
<div class="a" style="left:0;top:50px;width:1056px;height:22px;background:#ffffff"></div>
<div class="a" style="left:87px;top:50px;width:1px;height:22px;background:#f3f3f3"></div>
<div class="a" style="left:198px;top:50px;width:1px;height:22px;background:#f3f3f3"></div>
<div class="a" style="left:243px;top:50px;width:1px;height:22px;background:#f3f3f3"></div>
<div class="a" style="left:381px;top:50px;width:1px;height:22px;background:#f3f3f3"></div>
<div class="a" style="left:538px;top:50px;width:1px;height:22px;background:#f3f3f3"></div>
<div class="a" style="left:612px;top:50px;width:1px;height:22px;background:#f3f3f3"></div>
<div class="a" style="left:697px;top:50px;width:1px;height:22px;background:#f3f3f3"></div>
<div class="a" style="left:795px;top:50px;width:1px;height:22px;background:#f3f3f3"></div>
<div class="a" style="left:994px;top:50px;width:1px;height:22px;background:#f3f3f3"></div>
<div class="a td" style="left:7px;top:51px">พิษณุโลก</div>
<div class="a td" style="left:94px;top:51px">พิษณุโลกที่ 2</div>
<div class="a td" style="left:205px;top:51px">12</div>
<div class="a td" style="left:250px;top:51px">แก่งโสภา</div>
<div class="a td" style="left:388px;top:51px">บ้านโป่งปะ</div>
<div class="a td" style="left:538px;width:74px;text-align:center;top:51px">10</div>
<div class="a td" style="left:802px;top:51px">นายภาณุพงษ์ พิทักพูลศิลป์</div>
<div class="a td" style="left:1001px;top:51px">086-929-</div>
<div class="a" style="left:0;top:72px;width:1056px;height:42px;background:#e9eaec"></div>
<div class="a" style="left:87px;top:72px;width:1px;height:42px;background:#e3e4e6"></div>
<div class="a" style="left:198px;top:72px;width:1px;height:42px;background:#e3e4e6"></div>
<div class="a" style="left:243px;top:72px;width:1px;height:42px;background:#e3e4e6"></div>
<div class="a" style="left:381px;top:72px;width:1px;height:42px;background:#e3e4e6"></div>
<div class="a" style="left:538px;top:72px;width:1px;height:42px;background:#e3e4e6"></div>
<div class="a" style="left:612px;top:72px;width:1px;height:42px;background:#e3e4e6"></div>
<div class="a" style="left:697px;top:72px;width:1px;height:42px;background:#e3e4e6"></div>
<div class="a" style="left:795px;top:72px;width:1px;height:42px;background:#e3e4e6"></div>
<div class="a" style="left:994px;top:72px;width:1px;height:42px;background:#e3e4e6"></div>
<div class="a td" style="left:7px;top:73px">กาญจนบุรี</div>
<div class="a td" style="left:94px;top:73px">กาญจนบุรี</div>
<div class="a td" style="left:205px;top:73px">323</div>
<div class="a td" style="left:250px;top:73px">หมวดทางหลวง<br>ทองผาภูมิ</div>
<div class="a td" style="left:388px;top:73px">บ้านกุยมั้ง</div>
<div class="a td" style="left:538px;width:74px;text-align:center;top:73px">20</div>
<div class="a td" style="left:802px;top:73px">นายอภิลักษณ์ ทศพร</div>
<div class="a td" style="left:1001px;top:73px">082-2447</div>
<div class="a" style="left:0;top:114px;width:1056px;height:42px;background:#ffffff"></div>
<div class="a" style="left:87px;top:114px;width:1px;height:42px;background:#f3f3f3"></div>
<div class="a" style="left:198px;top:114px;width:1px;height:42px;background:#f3f3f3"></div>
<div class="a" style="left:243px;top:114px;width:1px;height:42px;background:#f3f3f3"></div>
<div class="a" style="left:381px;top:114px;width:1px;height:42px;background:#f3f3f3"></div>
<div class="a" style="left:538px;top:114px;width:1px;height:42px;background:#f3f3f3"></div>
<div class="a" style="left:612px;top:114px;width:1px;height:42px;background:#f3f3f3"></div>
<div class="a" style="left:697px;top:114px;width:1px;height:42px;background:#f3f3f3"></div>
<div class="a" style="left:795px;top:114px;width:1px;height:42px;background:#f3f3f3"></div>
<div class="a" style="left:994px;top:114px;width:1px;height:42px;background:#f3f3f3"></div>
<div class="a td" style="left:7px;top:115px">กาญจนบุรี</div>
<div class="a td" style="left:94px;top:115px">กาญจนบุรี</div>
<div class="a td" style="left:205px;top:115px">323</div>
<div class="a td" style="left:250px;top:115px">หมวดทางหลวง<br>ไทรโยค</div>
<div class="a td" style="left:388px;top:115px">บ้านเขาสามชั้น</div>
<div class="a td" style="left:538px;width:74px;text-align:center;top:115px">10</div>
<div class="a td" style="left:802px;top:115px">นายชนะชัย สระบัว</div>
<div class="a td" style="left:1001px;top:115px">089-509-</div>
<div class="a" style="left:0;top:156px;width:1056px;height:101px;background:#e9eaec"></div>
<div class="a" style="left:87px;top:156px;width:1px;height:101px;background:#e3e4e6"></div>
<div class="a" style="left:198px;top:156px;width:1px;height:101px;background:#e3e4e6"></div>
<div class="a" style="left:243px;top:156px;width:1px;height:101px;background:#e3e4e6"></div>
<div class="a" style="left:381px;top:156px;width:1px;height:101px;background:#e3e4e6"></div>
<div class="a" style="left:538px;top:156px;width:1px;height:101px;background:#e3e4e6"></div>
<div class="a" style="left:612px;top:156px;width:1px;height:101px;background:#e3e4e6"></div>
<div class="a" style="left:697px;top:156px;width:1px;height:101px;background:#e3e4e6"></div>
<div class="a" style="left:795px;top:156px;width:1px;height:101px;background:#e3e4e6"></div>
<div class="a" style="left:994px;top:156px;width:1px;height:101px;background:#e3e4e6"></div>
<div class="a td" style="left:7px;top:157px">กำแพงเพชร</div>
<div class="a td" style="left:94px;top:157px">กำแพงเพชร</div>
<div class="a td" style="left:205px;top:157px">1</div>
<div class="a td" style="left:250px;top:157px">สำนักงานแขวง<br>กำแพงเพชร</div>
<div class="a td" style="left:388px;top:157px">สำนักงานแขวงฯ<br>กำแพงเพชร<br>(ชื่อท้องถิ่นแขวงฯ<br>กำแพงเพชร<br>บ้านทุ่งเศรษฐีใต้)</div>
<div class="a td" style="left:538px;width:74px;text-align:center;top:157px">20</div>
<div class="a td" style="left:802px;top:157px">นายสุชาติ ตาทิพย์</div>
<div class="a td" style="left:1001px;top:157px">081-887-</div>
<div class="a" style="left:0;top:257px;width:1056px;height:42px;background:#ffffff"></div>
<div class="a" style="left:87px;top:257px;width:1px;height:42px;background:#f3f3f3"></div>
<div class="a" style="left:198px;top:257px;width:1px;height:42px;background:#f3f3f3"></div>
<div class="a" style="left:243px;top:257px;width:1px;height:42px;background:#f3f3f3"></div>
<div class="a" style="left:381px;top:257px;width:1px;height:42px;background:#f3f3f3"></div>
<div class="a" style="left:538px;top:257px;width:1px;height:42px;background:#f3f3f3"></div>
<div class="a" style="left:612px;top:257px;width:1px;height:42px;background:#f3f3f3"></div>
<div class="a" style="left:697px;top:257px;width:1px;height:42px;background:#f3f3f3"></div>
<div class="a" style="left:795px;top:257px;width:1px;height:42px;background:#f3f3f3"></div>
<div class="a" style="left:994px;top:257px;width:1px;height:42px;background:#f3f3f3"></div>
<div class="a td" style="left:7px;top:258px">กำแพงเพชร</div>
<div class="a td" style="left:94px;top:258px">กำแพงเพชร</div>
<div class="a td" style="left:205px;top:258px">1</div>
<div class="a td" style="left:250px;top:258px">หมวดทางหลวง<br>โกสัมพีนคร</div>
<div class="a td" style="left:388px;top:258px">หมวดทางหลวงเกาะราก<br>เสียด</div>
<div class="a td" style="left:538px;width:74px;text-align:center;top:258px">20</div>
<div class="a td" style="left:802px;top:258px">นายพีรพงศ์ คุ้มไพรี</div>
<div class="a td" style="left:1001px;top:258px">089-855-</div>
<div class="a" style="left:0;top:299px;width:1056px;height:42px;background:#e9eaec"></div>
<div class="a" style="left:87px;top:299px;width:1px;height:42px;background:#e3e4e6"></div>
<div class="a" style="left:198px;top:299px;width:1px;height:42px;background:#e3e4e6"></div>
<div class="a" style="left:243px;top:299px;width:1px;height:42px;background:#e3e4e6"></div>
<div class="a" style="left:381px;top:299px;width:1px;height:42px;background:#e3e4e6"></div>
<div class="a" style="left:538px;top:299px;width:1px;height:42px;background:#e3e4e6"></div>
<div class="a" style="left:612px;top:299px;width:1px;height:42px;background:#e3e4e6"></div>
<div class="a" style="left:697px;top:299px;width:1px;height:42px;background:#e3e4e6"></div>
<div class="a" style="left:795px;top:299px;width:1px;height:42px;background:#e3e4e6"></div>
<div class="a" style="left:994px;top:299px;width:1px;height:42px;background:#e3e4e6"></div>
<div class="a td" style="left:7px;top:300px">กำแพงเพชร</div>
<div class="a td" style="left:94px;top:300px">กำแพงเพชร</div>
<div class="a td" style="left:205px;top:300px">1</div>
<div class="a td" style="left:250px;top:300px">หมวดทางหลวง<br>คลองขลุง</div>
<div class="a td" style="left:388px;top:300px">หมวดทางหลวงท่าพุทรา</div>
<div class="a td" style="left:538px;width:74px;text-align:center;top:300px">10</div>
<div class="a td" style="left:802px;top:300px">นายพีรพงศ์ คุ้มไพรี</div>
<div class="a td" style="left:1001px;top:300px">089-855-</div>
<div class="a" style="left:0;top:341px;width:1056px;height:42px;background:#ffffff"></div>
<div class="a" style="left:87px;top:341px;width:1px;height:42px;background:#f3f3f3"></div>
<div class="a" style="left:198px;top:341px;width:1px;height:42px;background:#f3f3f3"></div>
<div class="a" style="left:243px;top:341px;width:1px;height:42px;background:#f3f3f3"></div>
<div class="a" style="left:381px;top:341px;width:1px;height:42px;background:#f3f3f3"></div>
<div class="a" style="left:538px;top:341px;width:1px;height:42px;background:#f3f3f3"></div>
<div class="a" style="left:612px;top:341px;width:1px;height:42px;background:#f3f3f3"></div>
<div class="a" style="left:697px;top:341px;width:1px;height:42px;background:#f3f3f3"></div>
<div class="a" style="left:795px;top:341px;width:1px;height:42px;background:#f3f3f3"></div>
<div class="a" style="left:994px;top:341px;width:1px;height:42px;background:#f3f3f3"></div>
<div class="a td" style="left:7px;top:342px">กำแพงเพชร</div>
<div class="a td" style="left:94px;top:342px">กำแพงเพชร</div>
<div class="a td" style="left:205px;top:342px">1117</div>
<div class="a td" style="left:250px;top:342px">หมวดทางหลวง<br>กำแพงเพชร</div>
<div class="a td" style="left:388px;top:342px">หมวดทางหลวงกำแพงเพชร</div>
<div class="a td" style="left:538px;width:74px;text-align:center;top:342px">15</div>
<div class="a td" style="left:802px;top:342px">นายสุรชาติ ศิริพงษ์</div>
<div class="a td" style="left:1001px;top:342px">096-441-</div>
</div>
<div class="a" style="left:1558px;top:508px;width:11px;height:350px;background:#f3f3f3;border-radius:0 0 5px 0"></div>
<div class="a" style="left:1560px;top:509px;width:8px;height:73px;background:#a6a6a6;border-radius:4px"></div>
<div class="a" style="left:502px;top:858px;width:1056px;height:11px;background:#f3f3f3;border-radius:0 0 5px 5px"></div>
<div class="a" style="left:503.5px;top:860px;width:997px;height:8px;background:#a3a3a3;border-radius:4px"></div>

</body></html>
